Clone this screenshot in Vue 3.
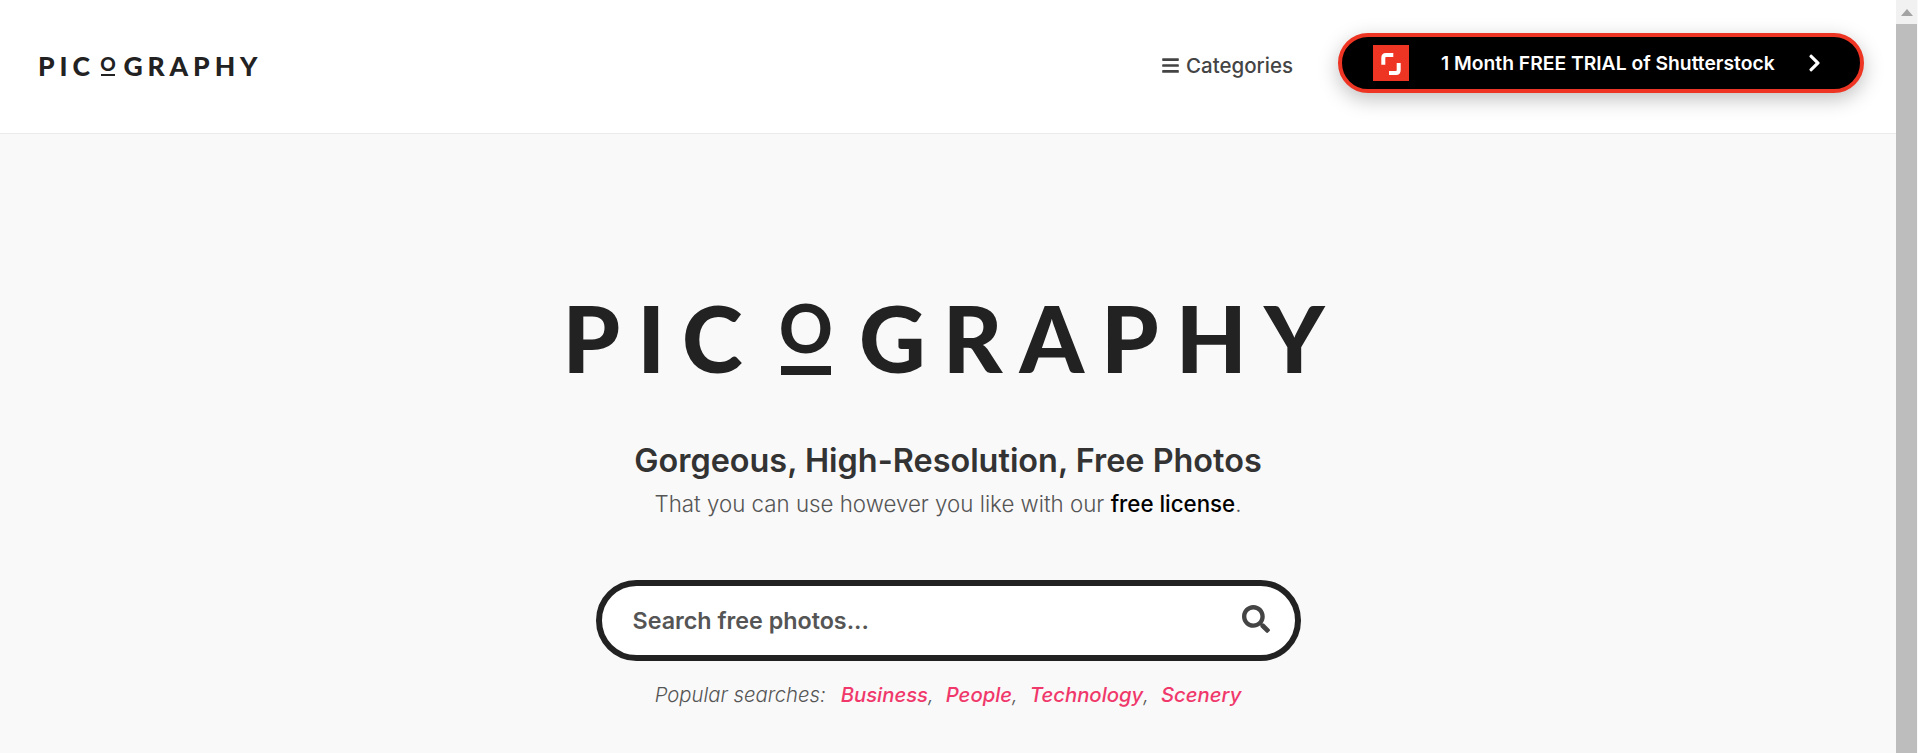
<template>
  <div class="page">
    <div class="content">
      <header class="topbar">
        <a class="logo logo-small">PIC<span class="logo-o">O</span>GRAPHY</a>
        <nav class="nav">
          <a class="categories">
            <svg class="bars" viewBox="0 0 448 512"><path :d="icons.bars" /></svg>
            Categories
          </a>
          <a class="promo">
            <span class="promo-mark">
              <svg viewBox="0 0 36 36" fill="none" stroke="#fff" stroke-width="4">
                <path d="M20.3 10H13Q10.3 10 10.3 13V19.7" />
                <path d="M25.7 18V25Q25.7 28 23 28H16" />
              </svg>
            </span>
            <span class="promo-text">1 Month FREE TRIAL of Shutterstock</span>
            <svg class="chevron" viewBox="0 0 320 512"><path :d="icons.chevron" /></svg>
          </a>
        </nav>
      </header>

      <main class="hero">
        <div class="logo logo-big">PIC<span class="logo-o">O</span>GRAPHY</div>
        <h1>Gorgeous, High-Resolution, Free Photos</h1>
        <p class="sub">That you can use however you like with our <b>free license</b>.</p>
        <form class="search" @submit.prevent>
          <input type="text" placeholder="Search free photos..." />
          <svg class="search-icon" viewBox="0 0 512 512"><path :d="icons.search" /></svg>
        </form>
        <p class="popular">
          <span class="popular-label">Popular searches:</span>
          <template v-for="(term, i) in popular" :key="term">
            <a>{{ term }}</a><span v-if="i < popular.length - 1" class="comma">,</span>
          </template>
        </p>
      </main>
    </div>

    <aside class="scrollbar">
      <div class="scroll-up"><i></i></div>
      <div class="scroll-thumb"></div>
    </aside>
  </div>
</template>

<script setup>
const popular = ['Business', 'People', 'Technology', 'Scenery']

const icons = {
  bars: 'M16 132h416c8.837 0 16-7.163 16-16V76c0-8.837-7.163-16-16-16H16C7.163 60 0 67.163 0 76v40c0 8.837 7.163 16 16 16zm0 160h416c8.837 0 16-7.163 16-16v-40c0-8.837-7.163-16-16-16H16c-8.837 0-16 7.163-16 16v40c0 8.837 7.163 16 16 16zm0 160h416c8.837 0 16-7.163 16-16v-40c0-8.837-7.163-16-16-16H16c-8.837 0-16 7.163-16 16v40c0 8.837 7.163 16 16 16z',
  chevron: 'M285.476 272.971L91.132 467.314c-9.373 9.373-24.569 9.373-33.941 0l-22.667-22.667c-9.357-9.357-9.375-24.522-.04-33.901L188.505 256 34.484 101.255c-9.335-9.379-9.317-24.544.04-33.901l22.667-22.667c9.373-9.373 24.569-9.373 33.941 0L285.475 239.03c9.373 9.372 9.373 24.568.001 33.941z',
  search: 'M505 442.7L405.3 343c-4.5-4.5-10.6-7-17-7H372c27.6-35.3 44-79.7 44-128C416 93.1 322.9 0 208 0S0 93.1 0 208s93.1 208 208 208c48.3 0 92.7-16.4 128-44v16.3c0 6.4 2.5 12.5 7 17l99.7 99.7c9.4 9.4 24.6 9.4 33.9 0l28.3-28.3c9.4-9.4 9.4-24.6.1-34zM208 336c-70.7 0-128-57.2-128-128 0-70.7 57.2-128 128-128 70.7 0 128 57.2 128 128 0 70.7-57.2 128-128 128z'
}
</script>

<style>
html, body {
  margin: 0;
  overflow: hidden;
}
</style>

<style scoped>
.page {
  display: flex;
  height: 753px;
  overflow: hidden;
  font-family: Inter, "Liberation Sans", sans-serif;
  background: #f9f9f9;
}

.content {
  flex: 1;
  min-width: 0;
}

.topbar {
  display: flex;
  justify-content: space-between;
  align-items: center;
  box-sizing: border-box;
  height: 134px;
  padding: 0 32px 0 38px;
  background: #fff;
  border-bottom: 1px solid #ebebeb;
}

.logo {
  font-family: Lato, sans-serif;
  font-weight: 900;
  color: #222;
  line-height: 1;
  white-space: nowrap;
}

.logo-small {
  font-size: 26.5px;
  letter-spacing: 0.185em;
}

.logo-big {
  font-size: 92px;
  letter-spacing: 0.185em;
  margin-right: -0.087em;
}

.logo-o {
  position: relative;
  display: inline-block;
  margin: 0 0.14em 0 0.29em;
  font-size: 0.72em;
  vertical-align: 0.3em;
  line-height: 1;
}

.logo-o::after {
  content: "";
  position: absolute;
  left: 0.03em;
  right: 0.29em;
  bottom: -0.2em;
  height: 0.125em;
  background: #222;
}

.nav {
  display: flex;
  align-items: center;
  gap: 45px;
}

.categories {
  display: flex;
  align-items: center;
  gap: 7px;
  margin-top: -2px;
  font-size: 20.5px;
  font-weight: 500;
  color: #444;
}

.bars {
  width: 17px;
  height: 19px;
  fill: #444;
}

.promo {
  display: flex;
  align-items: center;
  box-sizing: border-box;
  width: 526px;
  height: 60px;
  margin-top: -8px;
  padding: 0 38px 0 31px;
  background: #000;
  border: 4px solid #ee3524;
  border-radius: 30px;
  box-shadow: 0 6px 20px rgba(0, 0, 0, 0.25);
}

.promo-mark {
  flex: none;
  display: block;
  width: 36px;
  height: 36px;
  background: #ee3524;
}

.promo-mark svg {
  display: block;
}

.promo-text {
  margin-left: 32px;
  font-size: 19.3px;
  font-weight: 600;
  color: #fff;
  white-space: nowrap;
}

.chevron {
  flex: none;
  width: 15px;
  height: 20px;
  margin-left: auto;
  fill: #fff;
}

.hero {
  display: flex;
  flex-direction: column;
  align-items: center;
  padding-top: 158px;
}

h1 {
  margin: 57px 0 0;
  font-size: 32.4px;
  line-height: 40px;
  font-weight: 600;
  color: #333;
}

.sub {
  margin: 8px 0 0;
  font-size: 22.3px;
  line-height: 30px;
  font-weight: 300;
  color: #555;
}

.sub b {
  font-weight: 500;
  color: #000;
}

.search {
  display: flex;
  align-items: center;
  box-sizing: border-box;
  width: 705px;
  height: 81px;
  margin-top: 61px;
  padding: 0 25px 0 31px;
  background: #fff;
  border: 6px solid #222;
  border-radius: 41px;
}

.search input {
  flex: 1;
  min-width: 0;
  border: 0;
  outline: 0;
  padding: 0;
  background: none;
  font: 600 23.3px Inter, "Liberation Sans", sans-serif;
  color: #555;
}

.search input::placeholder {
  color: #555;
  opacity: 1;
}

.search-icon {
  flex: none;
  width: 28px;
  height: 28px;
  margin-top: -4px;
  fill: #444;
}

.popular {
  margin: 20px 0 0;
  font-size: 20.3px;
  line-height: 28px;
  font-style: italic;
  font-weight: 300;
  color: #555;
}

.popular-label {
  margin-right: 15px;
}

.popular a {
  font-weight: 500;
  color: #f0386b;
}

.comma {
  margin-right: 12px;
}

.scrollbar {
  flex: none;
  width: 21px;
  margin-right: 1px;
  background: #f1f1f1;
}

.scroll-up {
  display: flex;
  justify-content: center;
  align-items: center;
  height: 24px;
}

.scroll-up i {
  width: 0;
  height: 0;
  border-left: 6px solid transparent;
  border-right: 6px solid transparent;
  border-bottom: 7px solid #a3a3a3;
}

.scroll-thumb {
  height: 729px;
  background: #bdbdbd;
}
</style>
